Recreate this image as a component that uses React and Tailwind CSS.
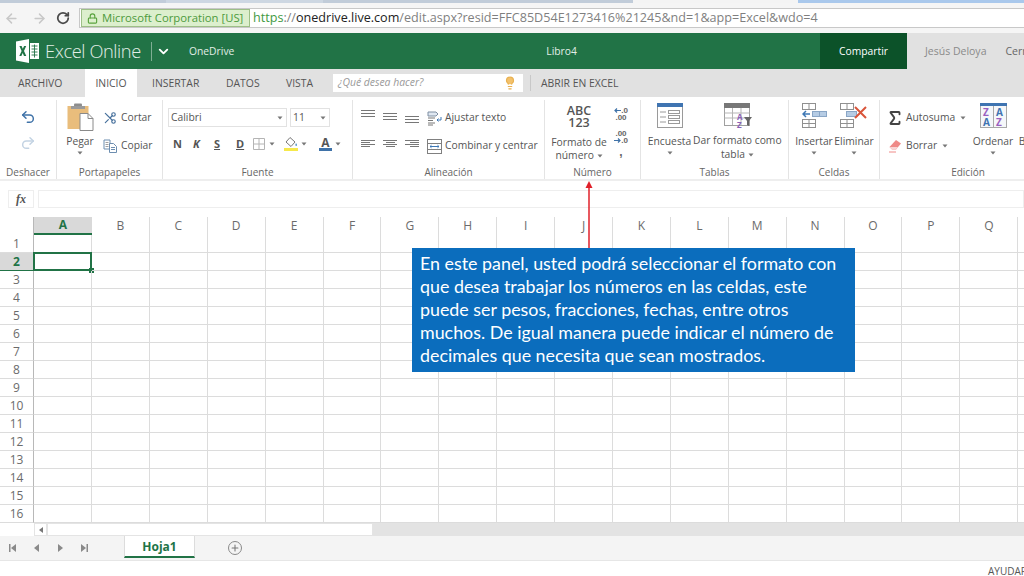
import React from "react";
import { ArrowLeft, ArrowRight, RotateCw, Lock, ChevronDown, Scissors, Undo2, Redo2, Lightbulb, Plus, Sigma } from "lucide-react";

const COLS = ["A", "B", "C", "D", "E", "F", "G", "H", "I", "J", "K", "L", "M", "N", "O", "P", "Q", "R"];
const ROWS = Array.from({ length: 16 }, (_, i) => i + 1);

const Caret = ({ className = "" }) => (
  <svg width="6" height="4" viewBox="0 0 6 4" className={className}>
    <path d="M0.5 0.5h5L3 3.5z" fill="#777" />
  </svg>
);

const Lines = ({ widths, gap = 2, color = "#777" }) => (
  <div className="flex flex-col" style={{ gap }}>
    {widths.map((w, i) => (
      <div key={i} className="h-px" style={{ width: w, backgroundColor: color }} />
    ))}
  </div>
);

const ExcelLogo = () => (
  <svg width="24" height="24" viewBox="0 0 24 24">
    <path d="M0 2.5L13 0v24L0 21.5z" fill="#fff" />
    <path d="M3.4 7h2.2l1.2 2.7L8.1 7h2.1L8 12l2.3 5H8l-1.3-3-1.3 3H3.3l2.3-5z" fill="#217346" />
    <rect x="14" y="4" width="9" height="16" fill="#fff" />
    <path d="M15.5 7h6M15.5 10h6M15.5 13h6M15.5 16h6M18.5 5.5v13" stroke="#217346" strokeWidth="0.9" />
  </svg>
);

const PasteIcon = () => (
  <svg width="27" height="28" viewBox="0 0 27 28">
    <rect x="0.5" y="3" width="21" height="23" fill="#e9bd7c" />
    <rect x="7" y="0.5" width="8" height="3" rx="1" fill="#8d8d8d" />
    <rect x="4" y="3" width="14" height="3" fill="#9a9a9a" />
    <path d="M13 10.5h8l5 5v12H13z" fill="#fff" stroke="#8a8a8a" />
    <path d="M21 10.5v5h5" fill="none" stroke="#8a8a8a" />
  </svg>
);

const CopyIcon = () => (
  <svg width="15" height="14" viewBox="0 0 15 14" fill="none" stroke="#6d8eb0">
    <path d="M1 1h6v9H1z" />
    <path d="M2.5 3.5h3M2.5 5.5h3M2.5 7.5h3" stroke="#a0a0a0" />
    <path d="M6.5 4.5h4l3 3v6h-7z" fill="#fff" />
    <path d="M8 8.5h4M8 10.5h4" stroke="#6d8eb0" />
  </svg>
);

const BordersIcon = () => (
  <svg width="12" height="12" viewBox="0 0 12 12" fill="none" stroke="#b4b4b4">
    <path d="M.5.5h11v11H.5zM6 .5v11M.5 6h11" />
  </svg>
);

const FillIcon = () => (
  <div className="flex w-[14px] flex-col items-center gap-px">
    <svg width="14" height="10" viewBox="0 0 14 10">
      <path d="M6 0.5l5 4.5-4 4.5-5-4.5z" fill="#fff" stroke="#777" />
      <path d="M12 6c1 1.4 1.4 2 .7 2.8-.8.6-1.6-.3-1.4-1z" fill="#5a9ac8" />
    </svg>
    <div className="h-[3px] w-[14px] bg-[#f6e94b]" />
  </div>
);

const WrapIcon = () => (
  <svg width="15" height="15" viewBox="0 0 15 15" fill="none">
    <path d="M1 1h8l2 2-2 2H1z" fill="#dfe7f1" stroke="#7f8fa3" />
    <path d="M1 7h7M1 9.5h5M1 12h7M1 14h5" stroke="#777" />
    <path d="M14 6v3h-4M11.5 7.5L10 9l1.5 1.5" stroke="#3e78b5" />
  </svg>
);

const MergeIcon = () => (
  <svg width="15" height="15" viewBox="0 0 15 15" fill="none">
    <rect x="0.5" y="0.5" width="14" height="14" stroke="#808080" />
    <path d="M.5 4.5h14M.5 10.5h14" stroke="#808080" />
    <path d="M3 7.5h9M3 7.5l1.5-1.3M3 7.5l1.5 1.3M12 7.5l-1.5-1.3M12 7.5l-1.5 1.3" stroke="#3e78b5" />
  </svg>
);

const DecimalArrow = ({ left }) => (
  <svg width="7" height="5" viewBox="0 0 7 5" fill="none" stroke="#3f72a8" strokeWidth="1.200">
    {left ? <path d="M7 2.500H1M3 .5l-2 2 2 2" /> : <path d="M0 2.500h6M4 .5l2 2-2 2" />}
  </svg>
);

const SurveyIcon = () => (
  <svg width="26" height="25" viewBox="0 0 26 25" fill="none">
    <rect x="0.5" y="0.5" width="25" height="24" fill="#fff" stroke="#9a9a9a" />
    <rect x="0" y="0" width="26" height="4" fill="#3f74b1" />
    <path d="M3 9h6M3 14h6M3 19h6" stroke="#9a9a9a" />
    <rect x="11.5" y="7.5" width="11" height="3" stroke="#9a9a9a" />
    <rect x="11.5" y="12.5" width="11" height="3" stroke="#9a9a9a" />
    <rect x="11.5" y="17.5" width="11" height="3" stroke="#9a9a9a" />
  </svg>
);

const TableIcon = () => (
  <svg width="28" height="25" viewBox="0 0 28 25" fill="none">
    <rect x="0.5" y="0.5" width="25" height="22" fill="#fff" stroke="#a0a0a0" />
    <rect x="0" y="0" width="26" height="5" fill="#777" />
    <path d="M.5 10h25M.5 15h25M8.500 5v17M17 5v17" stroke="#b5b5b5" />
    <path d="M20 14h8l-3 4v5l-2-1v-4z" fill="#666" />
    <text x="13" y="17" fontSize="8" fontWeight="700" fill="#8a5fb5" fontFamily="Open Sans">A</text>
    <text x="13" y="25" fontSize="8" fontWeight="700" fill="#8a5fb5" fontFamily="Open Sans">Z</text>
  </svg>
);

const InsertIcon = () => (
  <svg width="25" height="25" viewBox="0 0 25 25" fill="none" stroke="#909090">
    <rect x="0.500" y="0.5" width="13" height="6" />
    <path d="M7 .5v6" />
    <rect x="0.500" y="16.5" width="13" height="8" />
    <path d="M7 16.500v8M.5 20.500h13" />
    <rect x="10.500" y="8.500" width="14" height="5" fill="#b6cce4" stroke="#8aa6c6" />
    <path d="M17.500 8.500v5" stroke="#8aa6c6" />
    <path d="M1 11h7M4 8l-3 3 3 3" stroke="#3e78b5" strokeWidth="1.500" />
  </svg>
);

const DeleteIcon = () => (
  <svg width="28" height="25" viewBox="0 0 28 25" fill="none" stroke="#909090">
    <rect x="0.500" y="0.5" width="13" height="6" />
    <path d="M7 .5v6" />
    <rect x="0.500" y="16.5" width="13" height="8" />
    <path d="M7 16.500v8M.5 20.500h13" />
    <rect x="6.500" y="8.500" width="10" height="5" fill="#b6cce4" stroke="#8aa6c6" />
    <path d="M15 4l11 11M26 4L15 15" stroke="#d9553a" strokeWidth="2" />
  </svg>
);

const EraserIcon = () => (
  <svg width="14" height="14" viewBox="0 0 14 14">
    <path d="M8 1l5 3.500-5 6H4L1.500 8z" fill="#ef8a88" />
    <path d="M1.500 8L4 10.500h4L10 8z" fill="#f8d5d5" />
    <path d="M1 13h7" stroke="#ef8a88" />
  </svg>
);

const SortIcon = () => (
  <svg width="27" height="25" viewBox="0 0 27 25" fill="none">
    <rect x="0.5" y="0.5" width="26" height="24" fill="#f5f7fa" stroke="#a8a8a8" />
    <rect x="0" y="0" width="27" height="3" fill="#3f74b1" />
    <path d="M13.500 3v21" stroke="#a8a8a8" />
    <text x="3" y="13" fontSize="10" fontWeight="700" fill="#9a5fc0" fontFamily="Open Sans">Z</text>
    <text x="3" y="23" fontSize="10" fontWeight="700" fill="#3f74b1" fontFamily="Open Sans">A</text>
    <text x="16" y="13" fontSize="10" fontWeight="700" fill="#3f74b1" fontFamily="Open Sans">A</text>
    <text x="16" y="23" fontSize="10" fontWeight="700" fill="#9a5fc0" fontFamily="Open Sans">Z</text>
  </svg>
);

const FindIcon = () => (
  <svg width="22" height="25" viewBox="0 0 22 25" fill="none" stroke="#8a8a8a">
    <rect x="0.5" y="6.500" width="7" height="14" />
  </svg>
);

const Group = ({ width, label, border = true, children }) => (
  <div className={`flex h-[79px] shrink-0 flex-col ${border ? "border-r border-[#e4e4e4]" : ""}`} style={{ width }}>
    <div className="h-[65px] min-h-0">{children}</div>
    <div className="text-center text-[10px] leading-[14px] text-[#666]">{label}</div>
  </div>
);

const BigButton = ({ width, icon, text, caret = true, className = "" }) => (
  <div className={`flex shrink-0 flex-col items-center ${className}`} style={{ width }}>
    <div className="flex h-[30px] items-start">{icon}</div>
    <div className="mt-[1px] whitespace-nowrap text-center text-[10.300px] leading-[14px] text-[#555]">{text}</div>
    {caret && <Caret className="mt-[3px]" />}
  </div>
);

const SmallButton = ({ icon, text, caret }) => (
  <div className="flex h-[16px] items-center whitespace-nowrap text-[10.300px] text-[#555]">
    <div className="flex w-[18px] shrink-0 justify-start">{icon}</div>
    <span>{text}</span>
    {caret && <Caret className="ml-[5px]" />}
  </div>
);

export default function App() {
  return (
    <div className="relative flex h-[576px] w-[1024px] flex-col overflow-hidden bg-white font-['Open_Sans',sans-serif]">
      {/* browser chrome */}
      <div className="flex h-[3px] shrink-0">
        <div className="w-[166px] bg-[#c1ccd9]" />
        <div className="w-[157px] bg-[#cdd7e2]" />
        <div className="w-[310px] bg-[#c1ccd9]" />
        <div className="w-[165px] bg-[#f4f4f4]" />
        <div className="flex-1 bg-[#a9c8ec]" />
      </div>
      <div className="flex h-[30px] shrink-0 items-center bg-[#f5f5f5] pl-[4px]">
        <ArrowLeft size={15} strokeWidth={2.4} className="text-[#c8c8c8]" />
        <ArrowRight size={15} strokeWidth={2.4} className="ml-[13px] text-[#c8c8c8]" />
        <RotateCw size={14} strokeWidth={3} className="ml-[9px] text-[#4a4a4a]" />
        <div className="ml-[9px] flex h-[20px] flex-1 items-center border-y border-l border-[#c8c8c8] bg-white pl-[1px]">
          <div className="flex h-[18px] w-[169px] items-center whitespace-nowrap border border-[#9dbf87] bg-[#dcefcd] pl-[5px] text-[11.300px] text-[#4c9a3c]">
            <Lock size={11} strokeWidth={2.5} className="mr-[4px] shrink-0 text-[#5aa33f]" />
            Microsoft Corporation [US]
          </div>
          <div className="ml-[3px] whitespace-nowrap text-[12.600px] text-[#7f7f7f]">
            <span className="text-[#3f9a3f]">https</span>://<span className="text-[#222]">onedrive.live.com</span>/edit.aspx?resid=FFC85D54E1273416%21245&amp;nd=1&amp;app=Excel&amp;wdo=4
          </div>
        </div>
      </div>

      {/* excel header */}
      <div className="flex h-[36px] shrink-0 items-center bg-[#e1e1e1]">
        <div className="flex h-full w-[820px] shrink-0 items-center bg-[#217346] pl-[16px] text-white">
          <ExcelLogo />
          <span className="ml-[5px] w-[96px] whitespace-nowrap text-[18.300px] font-light tracking-[-0.4px] text-[#e2eee7]">Excel Online</span>
          <div className="ml-[10px] h-[19px] w-px bg-[#7fae93]" />
          <ChevronDown size={15} strokeWidth={3} className="ml-[4px] mt-[1px]" />
          <span className="ml-[18px] mt-[2px] text-[10.300px] text-[#e2eee7]">OneDrive</span>
          <span className="ml-[312px] mt-[2px] text-[10.300px] text-[#e2eee7]">Libro4</span>
        </div>
        <div className="flex h-full w-[87px] shrink-0 items-center justify-center bg-[#0c5229] pt-[2px] text-[10.300px] text-white">Compartir</div>
        <span className="ml-[18px] mt-[2px] whitespace-nowrap text-[10.500px] text-[#8a8a8a]">Jesús Deloya</span>
        <div className="ml-[9px] mt-[2px] h-[14px] w-px bg-[#cfcfcf]" />
        <span className="ml-[10px] mt-[2px] whitespace-nowrap text-[10.500px] text-[#666]">Cerrar sesión</span>
      </div>

      {/* tabs */}
      <div className="flex h-[28px] shrink-0 items-center bg-[#e1e1e1] pl-[18px] text-[10.400px] text-[#555]">
        <span className="mt-[1px] w-[67px]">ARCHIVO</span>
        <div className="flex h-full w-[52px] items-center justify-center bg-white pt-[1px]">INICIO</div>
        <span className="ml-[15px] mt-[1px] w-[74px]">INSERTAR</span>
        <span className="mt-[1px] w-[60px]">DATOS</span>
        <span className="mt-[1px] w-[47px]">VISTA</span>
        <div className="flex h-[18px] w-[190px] items-center justify-between bg-white pl-[5px] pr-[6px] italic text-[#999]">
          ¿Qué desea hacer?
          <Lightbulb size={14} strokeWidth={2} className="fill-[#f3c16b] text-[#e8b04f]" />
        </div>
        <div className="ml-[7px] h-[16px] w-px bg-[#c8c8c8]" />
        <span className="ml-[10px] mt-[1px]">ABRIR EN EXCEL</span>
      </div>

      {/* ribbon */}
      <div className="flex h-[84px] shrink-0 border-b-2 border-[#eeeeee] pt-[3px]">
        <Group width={57} label="Deshacer">
          <div className="flex flex-col items-center gap-[10px] pt-[9px]">
            <Undo2 size={16} strokeWidth={2.2} className="text-[#3f72a8]" />
            <Redo2 size={16} strokeWidth={2.2} className="text-[#c3d3e3]" />
          </div>
        </Group>
        <Group width={106} label="Portapapeles">
          <div className="flex pl-[9px] pt-[3px]">
            <BigButton width={28} icon={<PasteIcon />} text="Pegar" />
            <div className="ml-[9px] flex flex-col gap-[12px] pt-[7px]">
              <SmallButton icon={<Scissors size={14} className="-scale-x-100 text-[#46709c]" />} text="Cortar" />
              <SmallButton icon={<CopyIcon />} text="Copiar" />
            </div>
          </div>
        </Group>
        <Group width={190} label="Fuente">
          <div className="pl-[5px] pt-[8px]">
            <div className="flex gap-[3px] text-[10.300px] text-[#555]">
              <div className="flex h-[19px] w-[119px] items-center justify-between border border-[#e2e2e2] pl-[2px] pr-[3px]">Calibri<Caret /></div>
              <div className="flex h-[19px] w-[40px] items-center justify-between border border-[#e2e2e2] pl-[2px] pr-[3px]">11<Caret /></div>
            </div>
            <div className="mt-[9px] flex h-[16px] items-center text-[11px] font-bold text-[#555]">
              <span className="ml-[5px] w-[20px]">N</span>
              <span className="w-[21px] italic">K</span>
              <span className="w-[22px] underline">S</span>
              <span className="w-[17px] underline">D</span>
              <BordersIcon />
              <Caret className="ml-[4px]" />
              <div className="ml-[9px]"><FillIcon /></div>
              <Caret className="ml-[3px]" />
              <div className="ml-[12px] flex flex-col items-center leading-[11px]">
                <span className="text-[12px] text-[#555]">A</span>
                <div className="h-[3px] w-[13px] bg-[#3f72a8]" />
              </div>
              <Caret className="ml-[3px]" />
            </div>
          </div>
        </Group>
        <Group width={192} label="Alineación">
          <div className="flex pl-[8px] pt-[10px]">
            <div className="flex w-[66px] flex-col gap-[15px]">
              <div className="flex h-[15px] gap-[8px]">
                <Lines widths={[14, 14, 14]} />
                <div className="pt-[3px]"><Lines widths={[14, 14, 14]} /></div>
                <div className="pt-[6px]"><Lines widths={[14, 14, 14]} /></div>
              </div>
              <div className="flex h-[9px] gap-[8px]">
                <Lines widths={[14, 9, 14, 9]} gap={1} />
                <div className="flex flex-col items-center gap-px"><div className="h-px w-[14px] bg-[#777]" /><div className="h-px w-[9px] bg-[#777]" /><div className="h-px w-[14px] bg-[#777]" /><div className="h-px w-[9px] bg-[#777]" /></div>
                <div className="flex flex-col items-end gap-px"><div className="h-px w-[14px] bg-[#777]" /><div className="h-px w-[9px] bg-[#777]" /><div className="h-px w-[14px] bg-[#777]" /><div className="h-px w-[9px] bg-[#777]" /></div>
              </div>
            </div>
            <div className="flex flex-col gap-[12px]">
              <SmallButton icon={<WrapIcon />} text="Ajustar texto" />
              <SmallButton icon={<MergeIcon />} text="Combinar y centrar" />
            </div>
          </div>
        </Group>
        <Group width={96} label="Número">
          <div className="flex pl-[6px] pt-[5px]">
            <div className="flex w-[56px] flex-col items-center text-center">
              <div className="text-[12.500px] font-semibold leading-[12px] text-[#555]">ABC<br />123</div>
              <div className="mt-[7px] whitespace-nowrap text-[10.300px] leading-[13px] text-[#555]">Formato de<br />número <Caret className="inline" /></div>
            </div>
            <div className="ml-[6px] flex w-[16px] flex-col items-center pt-[2px] font-['Liberation_Sans',sans-serif] text-[8px] font-bold leading-[7px] text-[#666]">
              <div className="flex items-center"><DecimalArrow left /><span>.0</span></div>
              <div>.00</div>
              <div className="mt-[9px]">.00</div>
              <div className="flex items-center"><DecimalArrow /><span>.0</span></div>
              <div className="mt-[5px] text-[12px]">,</div>
            </div>
          </div>
        </Group>
        <Group width={148} label="Tablas">
          <div className="flex pl-[5px] pt-[3px]">
            <BigButton width={47} icon={<SurveyIcon />} text="Encuesta" />
            <div className="flex flex-col items-center">
              <div className="h-[30px] pl-[1px]"><TableIcon /></div>
              <div className="mt-[1px] whitespace-nowrap text-center text-[10.300px] leading-[13.500px] text-[#555]">Dar formato como<br />tabla <Caret className="inline" /></div>
            </div>
          </div>
        </Group>
        <Group width={91} label="Celdas">
          <div className="flex pl-[5px] pt-[3px]">
            <BigButton width={40} icon={<InsertIcon />} text="Insertar" />
            <BigButton width={40} icon={<DeleteIcon />} text="Eliminar" />
          </div>
        </Group>
        <Group width={176} label="Edición" border={false}>
          <div className="flex pl-[8px] pt-[3px]">
            <div className="flex w-[83px] shrink-0 flex-col gap-[12px] pt-[7px]">
              <SmallButton icon={<Sigma size={18} strokeWidth={2.5} className="-ml-[2px] text-[#444]" />} text="Autosuma" caret />
              <SmallButton icon={<EraserIcon />} text="Borrar" caret />
            </div>
            <BigButton width={44} icon={<SortIcon />} text="Ordenar" />
            <BigButton width={32} icon={<FindIcon />} text="Buscar" className="ml-[4px]" />
          </div>
        </Group>
      </div>

      {/* formula bar */}
      <div className="mt-[9px] flex h-[18px] shrink-0 gap-[4px] pl-[8px]">
        <div className="flex w-[26px] items-center justify-center border border-[#eeeeee] font-['Liberation_Serif',serif] text-[12px] font-bold italic text-[#555]">fx</div>
        <div className="flex-1 border border-[#eeeeee]" />
      </div>

      {/* grid */}
      <div className="mt-[9px] grid shrink-0 grid-cols-[34px_58px_repeat(17,57.900px)] grid-rows-[18px_repeat(16,18px)] text-[12px] text-[#6b6b6b]">
        <div className="border-r border-[#b8b8b8]" />
        {COLS.map((c) => (
          <div
            key={c}
            className={
              c === "A"
                ? "flex items-center justify-center border-b-2 border-[#217346] bg-[#d9d9d9] font-bold text-[#217346]"
                : "flex items-center justify-center border-r border-[#dcdcdc]"
            }
          >
            {c}
          </div>
        ))}
        {ROWS.map((r) => (
          <React.Fragment key={r}>
            <div
              className={
                r === 2
                  ? "flex items-center justify-center border-r border-b border-[#217346] bg-[#d9d9d9] font-bold text-[#217346]"
                  : "flex items-center justify-center border-r border-b border-r-[#b8b8b8] border-b-[#dcdcdc]"
              }
            >
              {r}
            </div>
            {COLS.map((c) => (
              <div key={c} className="relative border-r border-b border-[#dcdcdc]">
                {r === 2 && c === "A" && (
                  <div className="absolute -inset-x-[1px] -top-[1px] bottom-[-1px] border-2 border-[#217346]">
                    <div className="absolute -bottom-[4px] -right-[4px] h-[5px] w-[5px] bg-[#217346]" />
                  </div>
                )}
              </div>
            ))}
          </React.Fragment>
        ))}
      </div>

      {/* horizontal scrollbar */}
      <div className="flex h-[13px] shrink-0 pl-[34px]">
        <div className="flex w-[13px] items-center justify-center border border-[#e4e4e4]">
          <svg width="4" height="6" viewBox="0 0 4 6"><path d="M4 0v6L0 3z" fill="#777" /></svg>
        </div>
        <div className="w-[326px] border border-[#e4e4e4]" />
        <div className="flex-1 bg-[#e3e3e3]" />
      </div>

      {/* sheet tabs */}
      <div className="flex h-[25px] shrink-0 items-center border-b border-[#e6e6e6] bg-[#f4f4f4] pl-[9px]">
        <div className="flex w-[79px] items-center justify-between text-[#888]">
          <svg width="7" height="8" viewBox="0 0 7 8"><path d="M0 0h1.500v8H0zM7 0v8L2 4z" fill="#8a8a8a" /></svg>
          <svg width="5" height="8" viewBox="0 0 5 8"><path d="M5 0v8L0 4z" fill="#8a8a8a" /></svg>
          <svg width="5" height="8" viewBox="0 0 5 8"><path d="M0 0v8l5-4z" fill="#8a8a8a" /></svg>
          <svg width="7" height="8" viewBox="0 0 7 8"><path d="M0 0v8l5-4zM5.500 0H7v8H5.500z" fill="#8a8a8a" /></svg>
        </div>
        <div className="ml-[36px] flex h-[22px] w-[71px] items-center justify-center self-start border-x border-b-2 border-x-[#dcdcdc] border-b-[#217346] bg-white pt-[2px] text-[12px] font-bold text-[#217346]">Hoja1</div>
        <div className="ml-[33px] flex h-[14px] w-[14px] items-center justify-center rounded-full border border-[#8a8a8a]">
          <Plus size={10} strokeWidth={2.5} className="text-[#777]" />
        </div>
      </div>

      {/* status */}
      <div className="flex flex-1 items-start overflow-hidden pl-[988px] pt-[4px] text-[10px] leading-[13px] text-[#555]">
        <span className="whitespace-nowrap">AYUDAR A MEJORAR</span>
      </div>

      {/* callout over the sheet */}
      <div className="absolute left-[412px] top-[248px] h-[124px] w-[443px] bg-[#0b6dbd] px-[8px] pt-[4px] font-['Lato',sans-serif] text-[17.850px] leading-[23px] text-white">
        En este panel, usted podrá seleccionar el formato con<br />
        que desea trabajar los números en las celdas, este<br />
        puede ser pesos, fracciones, fechas, entre otros<br />
        muchos. De igual manera puede indicar el número de<br />
        decimales que necesita que sean mostrados.
      </div>
      <svg className="absolute left-[584px] top-[181px]" width="10" height="67" viewBox="0 0 10 67">
        <path d="M5 6v61" stroke="#e0202a" strokeWidth="1.500" />
        <path d="M5 0l3.500 7h-7z" fill="#e0202a" />
      </svg>
    </div>
  );
}
